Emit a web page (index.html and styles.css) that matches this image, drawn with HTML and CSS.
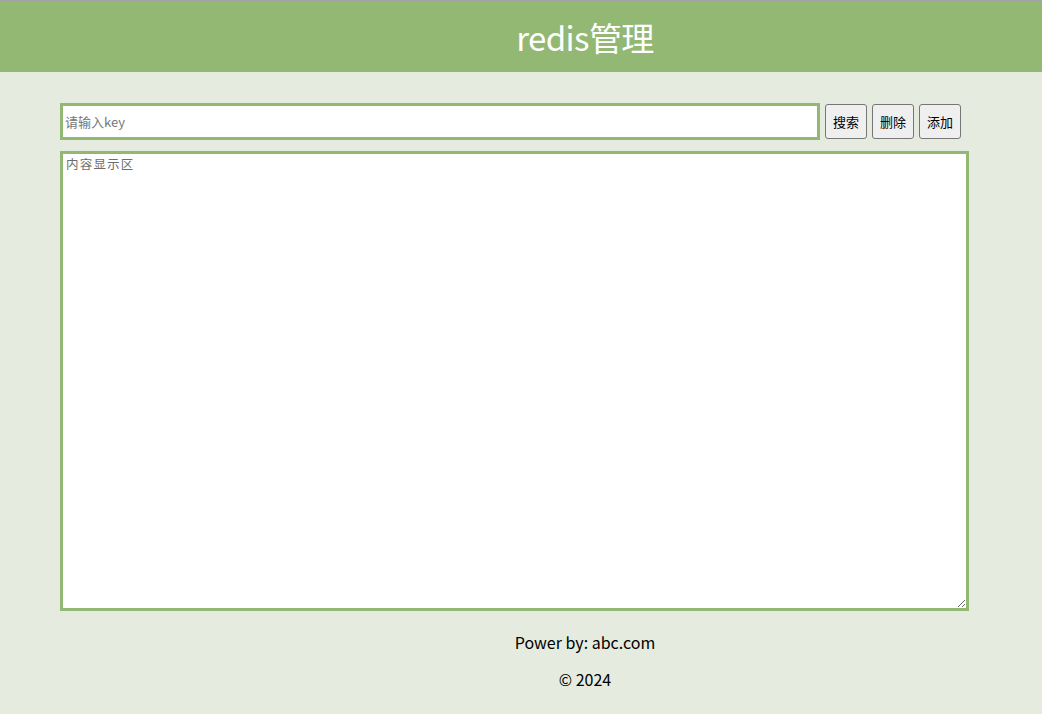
FILE: index.html
```html
<!DOCTYPE html>
<html lang="zh">
<head>
<meta charset="utf-8">
<title>redis管理</title>
<link rel="stylesheet" href="styles.css">
</head>
<body>
<div class="topline"></div>
<header class="header"><h1 class="title">redis管理</h1></header>
<main class="main">
  <div class="toolbar">
    <input class="key-input" type="text" placeholder="请输入key">
    <button class="btn">搜索</button>
    <button class="btn">删除</button>
    <button class="btn">添加</button>
  </div>
  <textarea class="content" placeholder="内容显示区"></textarea>
</main>
<footer class="footer">
  <p class="foot-line">Power by: abc.com</p>
  <p class="foot-line">© 2024</p>
</footer>
</body>
</html>
```
FILE: styles.css
```css
html, body {
  margin: 0;
  padding: 0;
  background: #e5ecdf;
  font-family: "Noto Sans CJK SC", "Noto Sans", sans-serif;
  overflow: hidden;
}
.topline {
  height: 2px;
  background: #a3a3a3;
}
.header {
  height: 70px;
  background: #93b874;
  display: flex;
  align-items: center;
  justify-content: center;
  padding-left: 128px;
}
.title {
  margin: 0;
  color: #ffffff;
  font-size: 33px;
  font-weight: normal;
  line-height: 1;
  letter-spacing: -0.6px;
}
.main {
  padding: 31px 0 0 60px;
  width: 909px;
}
.toolbar {
  display: flex;
  align-items: center;
  height: 37px;
}
.key-input {
  box-sizing: border-box;
  width: 760px;
  height: 37px;
  border: 3px solid #93b874;
  margin: 0 5px 0 0;
  padding: 0 2px;
  font-size: 13px;
  font-family: "Noto Sans CJK SC", sans-serif;
  outline: none;
}
.key-input::placeholder {
  color: #767676;
}
.btn {
  box-sizing: border-box;
  height: 35px;
  padding: 0 7px;
  margin-right: 5px;
  font-size: 13px;
  font-family: "Noto Sans CJK SC", sans-serif;
  background: #efefef;
  border: 1px solid #767676;
  border-radius: 3px;
  color: #000;
}
.content {
  display: block;
  box-sizing: border-box;
  width: 909px;
  height: 460px;
  margin-top: 11px;
  border: 3px solid #93b874;
  padding: 0 3px;
  font-size: 12.5px;
  font-family: "Noto Sans CJK SC", monospace;
  letter-spacing: 1.2px;
  outline: none;
}
.content::placeholder {
  color: #6d6d6d;
}
.footer {
  padding-left: 128px;
  text-align: center;
  padding-top: 20px;
}
.foot-line {
  margin: 0 0 14px 0;
  font-size: 16px;
  line-height: 23px;
  color: #000;
  font-family: "Noto Sans CJK SC", sans-serif;
}
```
